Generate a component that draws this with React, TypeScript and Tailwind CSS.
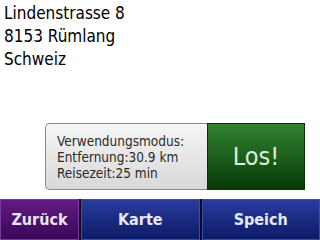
export default function App() {
  return (
    <div className="flex h-[240px] w-[320px] flex-col overflow-hidden bg-white font-['DejaVu_Sans_Condensed','DejaVu_Sans',sans-serif] [font-stretch:condensed]">
      {/* Address */}
      <div className="flex h-[123px] flex-col px-[4px] pt-[2px] text-[17px] leading-[23px] text-black">
        <span>Lindenstrasse 8</span>
        <span>8153 Rümlang</span>
        <span>Schweiz</span>
      </div>

      {/* Route info + Go */}
      <div className="ml-[45px] flex h-[67px] w-[260px]">
        <div className="flex flex-1 flex-col justify-center rounded-l-[5px] border border-r-0 border-[#8a8a8a] bg-gradient-to-b from-[#f6f6f6] to-[#d8d8d8] pl-[11px] text-[13.5px] leading-[16px] text-[#2a2a2a]">
          <span>Verwendungsmodus:</span>
          <span>Entfernung:30.9 km</span>
          <span>Reisezeit:25 min</span>
        </div>
        <button className="flex w-[98px] items-center justify-center border border-[#0b2e0b] bg-gradient-to-b from-[#2f822f] via-[#1c601c] to-[#083808] text-[25px] text-[#dcebd8]">
          Los!
        </button>
      </div>

      <div className="flex-1" />

      {/* Bottom bar */}
      <div className="flex h-[41px] gap-[2px] bg-[#0a0a20]">
        <button className="flex w-[79px] items-center justify-center border border-[#7a3a98] bg-gradient-to-b from-[#641a84] to-[#3a0858] pt-[1px] text-[16px] font-bold text-[#ece6f0]">
          Zurück
        </button>
        <button className="flex flex-1 items-center justify-center border border-[#3a4cb0] bg-gradient-to-b from-[#2a3c9e] to-[#0c1a66] pt-[1px] text-[16px] font-bold text-[#e6e8f4]">
          Karte
        </button>
        <button className="flex flex-1 items-center justify-center border border-[#3a4cb0] bg-gradient-to-b from-[#2a3c9e] to-[#0c1a66] pt-[1px] text-[16px] font-bold text-[#e6e8f4]">
          Speich
        </button>
      </div>
    </div>
  );
}
